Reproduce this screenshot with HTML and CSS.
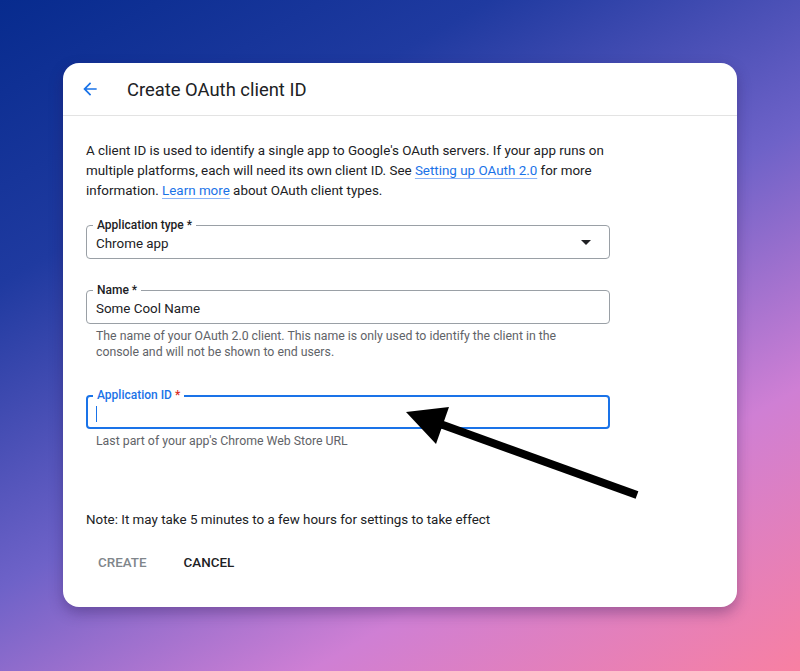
FILE: index.html
```html
<!DOCTYPE html>
<html lang="en">
  <head>
    <meta charset="UTF-8" />
    <meta name="viewport" content="width=device-width, initial-scale=1.0" />
    <title>Create OAuth client ID</title>
    <link rel="stylesheet" href="styles.css">
  </head>
  <body>
    <div class="card">
      <header class="card-header">
        <svg class="back" width="20" height="20" viewBox="0 0 24 24">
          <path d="M20 11H7.83l5.59-5.59L12 4l-8 8 8 8 1.41-1.41L7.83 13H20v-2z" fill="#1a73e8" />
        </svg>
        <h1>Create OAuth client ID</h1>
      </header>

      <div class="card-body">
        <p class="intro">
          A client ID is used to identify a single app to Google's OAuth servers. If your app runs on
          multiple platforms, each will need its own client ID. See
          <a href="#">Setting up OAuth 2.0</a> for more information.
          <a href="#">Learn more</a> about OAuth client types.
        </p>

        <div class="field select-field">
          <label>Application type *</label>
          <span class="value">Chrome app</span>
          <span class="caret"></span>
        </div>

        <div class="field name-field">
          <label>Name *</label>
          <span class="value">Some Cool Name</span>
        </div>
        <p class="hint">
          The name of your OAuth 2.0 client. This name is only used to identify the client in the
          console and will not be shown to end users.
        </p>

        <div class="field focused">
          <label>Application ID <span class="req">*</span></label>
          <span class="cursor"></span>
        </div>
        <p class="hint">Last part of your app's Chrome Web Store URL</p>

        <p class="note">Note: It may take 5 minutes to a few hours for settings to take effect</p>

        <div class="actions">
          <button class="btn disabled">CREATE</button>
          <button class="btn">CANCEL</button>
        </div>
      </div>
    </div>

    <!-- annotation arrow drawn over the card -->
    <svg class="pointer" width="800" height="671" viewBox="0 0 800 671">
      <line x1="637" y1="495" x2="432" y2="421" stroke="#000" stroke-width="8" />
      <polygon points="406,412 449,407 436,444" fill="#000" />
    </svg>
  </body>
</html>
```

FILE: styles.css
```css
body {
  font-family: Roboto, "Liberation Sans", Arial, sans-serif;
  margin: 0;
  padding: 63px 0 0;
  min-height: 671px;
  box-sizing: border-box;
  background: linear-gradient(150deg, #072b8e 0%, #1f3aa0 25%, #6e62c8 52%, #cf7fd4 75%, #f880a2 100%);
  position: relative;
  overflow: hidden;
  color: #202124;
}

.card {
  width: 674px;
  height: 544px;
  margin: 0 auto;
  background-color: #ffffff;
  border-radius: 16px;
  box-shadow: 0 6px 14px rgba(40, 20, 80, 0.35);
  overflow: hidden;
}

.card-header {
  display: flex;
  align-items: center;
  height: 52px;
  padding-left: 17px;
  border-bottom: 1px solid #e3e3e3;
}

.back {
  margin-right: 27px;
}

.card-header h1 {
  margin: 0;
  font-size: 18.4px;
  font-weight: 400;
  color: #202124;
}

.card-body {
  padding: 25px 127px 0 23px;
}

.intro {
  margin: 0 -6px 24px 0;
  font-size: 13.4px;
  line-height: 20px;
}

.intro a {
  color: #1a73e8;
  text-decoration: underline;
  text-decoration-color: #8ab4f8;
  text-underline-offset: 3px;
}

.field {
  position: relative;
  box-sizing: border-box;
  height: 34px;
  border: 1px solid #9aa0a6;
  border-radius: 4px;
  display: flex;
  align-items: center;
  padding: 0 9px;
  font-size: 13.4px;
}

.field label {
  position: absolute;
  top: -9px;
  left: 6px;
  padding: 0 4px;
  background: #ffffff;
  font-size: 12px;
  font-weight: 500;
  line-height: 16px;
  color: #202124;
}

.field .value {
  padding-top: 2px;
}

.select-field {
  margin-bottom: 31px;
}

.caret {
  margin-left: auto;
  margin-right: 9px;
  border-left: 5px solid transparent;
  border-right: 5px solid transparent;
  border-top: 5px solid #202124;
}

.field.focused {
  border: 2px solid #1a73e8;
  margin-top: 35px;
  padding: 0 8px;
}

.field.focused label {
  top: -10px;
  left: 5px;
  color: #1a73e8;
}

.req {
  color: #d93025;
}

.cursor {
  width: 1px;
  height: 16px;
  margin-top: 4px;
  background: #1a73e8;
}

.hint {
  max-width: 470px;
  margin: 4px 0 0 10px;
  font-size: 12.3px;
  line-height: 16px;
  color: #5f6368;
}

.note {
  margin: 61px 0 0;
  font-size: 13.4px;
  line-height: 20px;
}

.actions {
  display: flex;
  gap: 13px;
  margin-top: 14px;
}

.btn {
  font-family: inherit;
  background: none;
  border: none;
  padding: 0 12px;
  height: 36px;
  font-size: 13.4px;
  font-weight: 500;
  color: #202124;
  cursor: pointer;
}

.btn.disabled {
  color: #80868b;
}

.pointer {
  position: absolute;
  top: 0;
  left: 0;
  pointer-events: none;
}
```
